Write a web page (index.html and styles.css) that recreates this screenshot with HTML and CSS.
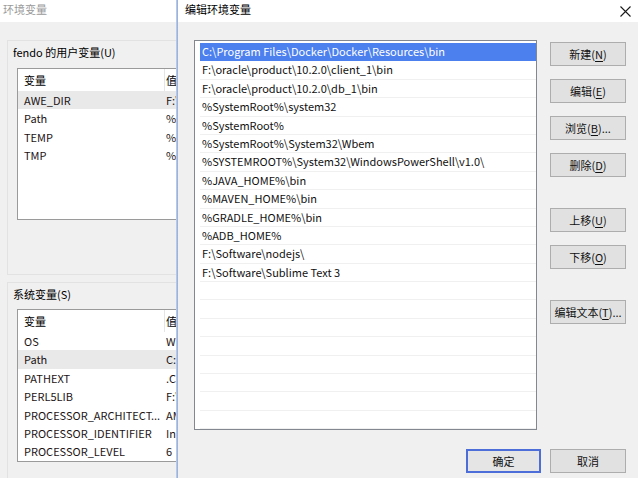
FILE: index.html
```html
<!DOCTYPE html>
<html lang="zh-CN">
<head>
<meta charset="utf-8">
<title>编辑环境变量</title>
<link rel="stylesheet" href="styles.css">
</head>
<body>
<div class="screen">
  <div class="bgwin">
    <div class="titlebar inactive">环境变量</div>
    <div class="bgbody">
      <div class="group g1">
        <div class="glabel">fendo 的用户变量(U)</div>
        <div class="lv lv1">
          <div class="lvhead"><span class="c1">变量</span><span class="c2">值</span></div>
          <div class="lvrow hl"><span class="c1">AWE_DIR</span><span class="c2">F:\AWE</span></div>
          <div class="lvrow"><span class="c1">Path</span><span class="c2">%USERPROFILE%</span></div>
          <div class="lvrow"><span class="c1">TEMP</span><span class="c2">%USERPROFILE%</span></div>
          <div class="lvrow"><span class="c1">TMP</span><span class="c2">%USERPROFILE%</span></div>
        </div>
      </div>
      <div class="group g2">
        <div class="glabel">系统变量(S)</div>
        <div class="lv lv2">
          <div class="lvhead"><span class="c1">变量</span><span class="c2">值</span></div>
          <div class="lvrow"><span class="c1">OS</span><span class="c2">Windows_NT</span></div>
          <div class="lvrow hl"><span class="c1">Path</span><span class="c2">C:\Program</span></div>
          <div class="lvrow"><span class="c1">PATHEXT</span><span class="c2">.COM</span></div>
          <div class="lvrow"><span class="c1">PERL5LIB</span><span class="c2">F:\</span></div>
          <div class="lvrow"><span class="c1">PROCESSOR_ARCHITECT...</span><span class="c2">AMD64</span></div>
          <div class="lvrow"><span class="c1">PROCESSOR_IDENTIFIER</span><span class="c2">Intel64</span></div>
          <div class="lvrow"><span class="c1">PROCESSOR_LEVEL</span><span class="c2">6</span></div>
        </div>
      </div>
    </div>
  </div>
  <div class="winedge"></div>
  <div class="dialog">
    <div class="titlebar dtitle">
      <span>编辑环境变量</span>
      <svg class="close" width="11" height="11" viewBox="0 0 11 11"><path d="M0.5 0.5L10.5 10.5M10.5 0.5L0.5 10.5" stroke="#1a1a1a" stroke-width="1.1" fill="none"/></svg>
    </div>
    <div class="dbody">
      <div class="dtop">
        <div class="plist">
          <div class="prow sel">C:\Program Files\Docker\Docker\Resources\bin</div>
          <div class="prow">F:\oracle\product\10.2.0\client_1\bin</div>
          <div class="prow">F:\oracle\product\10.2.0\db_1\bin</div>
          <div class="prow">%SystemRoot%\system32</div>
          <div class="prow">%SystemRoot%</div>
          <div class="prow">%SystemRoot%\System32\Wbem</div>
          <div class="prow">%SYSTEMROOT%\System32\WindowsPowerShell\v1.0\</div>
          <div class="prow">%JAVA_HOME%\bin</div>
          <div class="prow">%MAVEN_HOME%\bin</div>
          <div class="prow">%GRADLE_HOME%\bin</div>
          <div class="prow">%ADB_HOME%</div>
          <div class="prow">F:\Software\nodejs\</div>
          <div class="prow">F:\Software\Sublime Text 3</div>
          <div class="prow"></div>
          <div class="prow"></div>
          <div class="prow"></div>
          <div class="prow"></div>
          <div class="prow"></div>
          <div class="prow"></div>
          <div class="prow"></div>
          <div class="prow"></div>
        </div>
        <div class="btncol">
          <div class="btn">新建(<u>N</u>)</div>
          <div class="btn gap">编辑(<u>E</u>)</div>
          <div class="btn gap">浏览(<u>B</u>)...</div>
          <div class="btn gap">删除(<u>D</u>)</div>
          <div class="btn gapl">上移(<u>U</u>)</div>
          <div class="btn gap">下移(<u>O</u>)</div>
          <div class="btn gapl">编辑文本(<u>T</u>)...</div>
        </div>
      </div>
      <div class="dbottom">
        <div class="btn def">确定</div>
        <div class="btn">取消</div>
      </div>
    </div>
  </div>
</div>
</body>
</html>
```
FILE: styles.css
```css
html, body {
  margin: 0;
  padding: 0;
}
body {
  width: 638px;
  height: 478px;
  overflow: hidden;
  background: #f0f0f0;
  font-family: "Noto Sans CJK SC", "Noto Sans", sans-serif;
  font-size: 11px;
  color: #000;
}
.screen {
  display: flex;
  width: 638px;
  height: 478px;
  overflow: hidden;
}
.bgwin {
  width: 176px;
  flex: none;
  overflow: hidden;
  background: #f0f0f0;
}
.titlebar {
  height: 22px;
  background: #fff;
  line-height: 18px;
  box-sizing: border-box;
}
.inactive {
  color: #9a9a9a;
  padding-left: 3px;
}
.bgbody {
  padding-top: 18px;
}
.group {
  margin-left: 7px;
  width: 169px;
  border-left: 1px solid #e2e2e2;
  border-top: 1px solid #e2e2e2;
  border-bottom: 1px solid #e2e2e2;
  box-sizing: border-box;
}
.g1 {
  height: 235px;
  padding-top: 3px;
}
.g2 {
  margin-top: 7px;
  height: 200px;
  padding-top: 3px;
}
.glabel {
  line-height: 16px;
  padding-left: 5px;
  white-space: nowrap;
}
.lv {
  margin-left: 9px;
  width: 159px;
  background: #fff;
  border: 1px solid #9a9a9a;
  border-right: none;
  box-sizing: border-box;
  overflow: hidden;
}
.lv1 {
  margin-top: 8px;
  height: 152px;
}
.lv2 {
  margin-top: 7px;
  height: 153px;
}
.lvhead, .lvrow {
  display: flex;
  white-space: nowrap;
  overflow: hidden;
}
.lvhead {
  height: 22px;
  line-height: 22px;
}
.lvrow {
  height: 18.4px;
  line-height: 18.4px;
  color: #1c1414;
}
.lvrow.hl {
  background: #e9e9e9;
}
.c1 {
  width: 147px;
  padding-left: 6px;
  flex: none;
  overflow: hidden;
  box-sizing: border-box;
}
.lvhead .c1 {
  border-right: 1px solid #e5e5e5;
}
.c2 {
  padding-left: 1px;
  flex: 1;
  min-width: 0;
  overflow: hidden;
}
.winedge {
  width: 2px;
  flex: none;
  background: linear-gradient(to right, #c4d2ec, #8ea8d8);
}
.dialog {
  width: 460px;
  flex: none;
  background: #f0f0f0;
  display: flex;
  flex-direction: column;
}
.dtitle {
  display: flex;
  justify-content: space-between;
  align-items: flex-start;
  padding-left: 7px;
  padding-right: 7px;
}
.dtitle span {
  line-height: 18px;
}
.close {
  margin-top: 6px;
}
.dbody {
  padding: 18px 12px 0 16px;
}
.dtop {
  display: flex;
  align-items: flex-start;
}
.plist {
  width: 343px;
  height: 390px;
  box-sizing: border-box;
  border: 1px solid #828790;
  background: #fff;
  padding: 2px 0 0 5px;
  overflow: hidden;
  flex: none;
}
.prow {
  height: 18.4px;
  line-height: 17.4px;
  border-bottom: 1px solid #f0f0f0;
  box-sizing: border-box;
  padding-left: 2px;
  white-space: nowrap;
  color: #111;
}
.prow.sel {
  background: #4c80ef;
  color: #fff;
  border-bottom-color: #4c80ef;
}
.btncol {
  margin-left: 13px;
  padding-top: 2px;
  display: flex;
  flex-direction: column;
  width: 76px;
}
.btn {
  width: 76px;
  height: 24px;
  box-sizing: border-box;
  border: 1px solid #adadad;
  background: #e1e1e1;
  text-align: center;
  line-height: 22px;
  white-space: nowrap;
  color: #111;
}
.btn u {
  text-decoration-thickness: 1px;
  text-underline-offset: 2px;
}
.btn.gap {
  margin-top: 13px;
}
.btn.gapl {
  margin-top: 31px;
}
.dbottom {
  display: flex;
  justify-content: flex-end;
  gap: 9px;
  margin-top: 19px;
}
.btn.def {
  width: 75px;
  border: 2px solid #4d6ed8;
  background: #e5e5e5;
  line-height: 20px;
}
```
